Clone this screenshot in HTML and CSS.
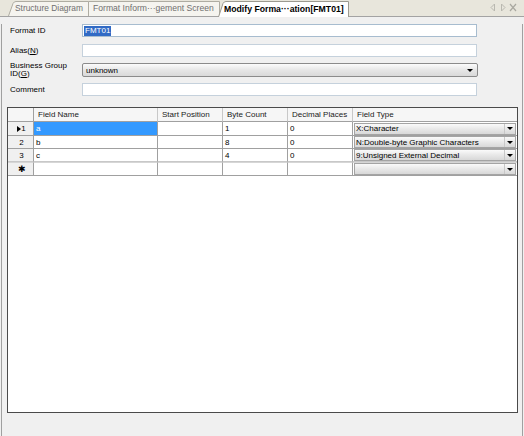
FILE: index.html
```html
<!DOCTYPE html>
<html>
<head>
<meta charset="utf-8">
<link rel="stylesheet" href="styles.css">
</head>
<body>
<div class="window">
  <div class="tabbar">
    <div class="tabs">
      <div class="tab tab-first">
        <svg class="tab-bg" width="81" height="15" viewBox="0 0 81 15"><path d="M0.5 15 L5 2.5 Q6 0.5 8 0.5 L80.5 0.5 L80.5 15" fill="#f5f4ef" stroke="#aeaca2"/></svg>
        <span class="tab-text">Structure Diagram</span>
      </div>
      <div class="tab tab-mid">
        <svg class="tab-bg" width="132" height="15" viewBox="0 0 132 15"><path d="M0.5 15 L0.5 0.5 L131.5 0.5 L131.5 15" fill="#f5f4ef" stroke="#aeaca2"/></svg>
        <span class="tab-text">Format Inform···gement Screen</span>
      </div>
      <div class="tab tab-active">
        <svg class="tab-bg" width="131" height="16" viewBox="0 0 131 16"><path d="M0.5 16 L5 2.5 Q6 0.5 8 0.5 L130.5 0.5 L130.5 16" fill="#ffffff" stroke="#9c9a90"/></svg>
        <span class="tab-text">Modify Forma···ation[FMT01]</span>
      </div>
    </div>
    <div class="tab-tools">
      <svg width="28" height="9" viewBox="0 0 28 9">
        <path d="M4.5 1 L1 4.5 L4.5 8 Z" fill="none" stroke="#b9b8b0"/>
        <path d="M11.5 1 L15 4.5 L11.5 8 Z" fill="none" stroke="#b9b8b0"/>
        <path d="M20 1 L26 8 M26 1 L20 8" stroke="#a9a8a0" stroke-width="1.2"/>
      </svg>
    </div>
  </div>
  <div class="panel">
    <div class="form">
      <div class="frow frow-1">
        <span class="flabel">Format ID</span>
        <div class="finput finput-focus"><span class="selected-text">FMT01</span></div>
      </div>
      <div class="frow frow-2">
        <span class="flabel">Alias(<u>N</u>)</span>
        <div class="finput"></div>
      </div>
      <div class="frow frow-3">
        <span class="flabel flabel-2l">Business Group<br>ID(<u>G</u>)</span>
        <div class="fselect"><span class="fselect-text">unknown</span><span class="fselect-arrow"></span></div>
      </div>
      <div class="frow frow-4">
        <span class="flabel">Comment</span>
        <div class="finput"></div>
      </div>
    </div>
    <div class="grid">
      <table class="gtable">
        <thead>
          <tr class="hrow">
            <th class="c-rh"></th>
            <th class="c-name">Field Name</th>
            <th class="c-start">Start Position</th>
            <th class="c-byte">Byte Count</th>
            <th class="c-dec">Decimal Places</th>
            <th class="c-type">Field Type</th>
          </tr>
        </thead>
        <tbody>
          <tr class="r1">
            <td class="rh"><span class="cur"></span>1</td>
            <td class="sel-cell">a</td>
            <td></td>
            <td>1</td>
            <td>0</td>
            <td class="tcell"><div class="combo"><span class="combo-text">X:Character</span><span class="combo-btn"></span></div></td>
          </tr>
          <tr class="r2">
            <td class="rh">2</td>
            <td>b</td>
            <td></td>
            <td>8</td>
            <td>0</td>
            <td class="tcell"><div class="combo"><span class="combo-text">N:Double-byte Graphic Characters</span><span class="combo-btn"></span></div></td>
          </tr>
          <tr class="r3">
            <td class="rh">3</td>
            <td>c</td>
            <td></td>
            <td>4</td>
            <td>0</td>
            <td class="tcell"><div class="combo"><span class="combo-text">9:Unsigned External Decimal</span><span class="combo-btn"></span></div></td>
          </tr>
          <tr class="rnew">
            <td class="rh rh-new">✱</td>
            <td></td>
            <td></td>
            <td></td>
            <td></td>
            <td class="tcell"><div class="combo"><span class="combo-text"></span><span class="combo-btn"></span></div></td>
          </tr>
        </tbody>
      </table>
    </div>
  </div>
</div>
</body>
</html>
```
FILE: styles.css
```css
* { box-sizing: border-box; }
html, body { margin: 0; padding: 0; }
body {
  width: 524px;
  height: 436px;
  background: #f0f0f0;
  font-family: "Liberation Sans", Arial, sans-serif;
  overflow: hidden;
}
.window { width: 524px; height: 436px; }

/* tab bar */
.tabbar {
  height: 17px;
  background: #e8e6dc;
  border-bottom: 1px solid #a3a3a3;
  display: flex;
  justify-content: space-between;
  align-items: flex-end;
}
.tabs { display: flex; align-items: flex-end; padding-left: 8px; height: 16px; }
.tab {
  position: relative;
  height: 15px;
  font-size: 8.4px;
  line-height: 15px;
  color: #707070;
  white-space: nowrap;
}
.tab-bg { position: absolute; left: 0; top: 0; }
.tab-text { position: relative; }
.tab-first { width: 81px; padding-left: 7px; z-index: 2; margin-right: -1px; }
.tab-mid { width: 132px; padding-left: 5px; z-index: 1; margin-right: -2px; font-size: 8.6px; }
.tab-active {
  width: 131px;
  height: 16px;
  margin-bottom: -1px;
  padding-left: 6px;
  line-height: 16px;
  font-size: 8.7px;
  color: #000;
  font-weight: bold;
  z-index: 3;
}
.tab-tools { padding: 0 6px 4px 0; display: flex; }

/* panel */
.panel {
  margin-left: 1px;
  width: 522px;
  height: 416px;
  border: 1px solid #a0a0a0;
  border-top: none;
  background: #f0f0f0;
}
.form { padding-left: 8px; }
.frow { display: flex; align-items: center; }
.frow-1 { margin-top: 7px; height: 13px; }
.frow-2 { margin-top: 7px; height: 13px; }
.frow-3 { margin-top: 6px; height: 14px; }
.frow-4 { margin-top: 6px; height: 13px; }
.flabel {
  width: 72px;
  font-size: 8px;
  color: #000;
  white-space: nowrap;
  line-height: 9px;
}
.flabel-2l { line-height: 8px; margin-top: -1px; }
.finput {
  width: 395px;
  height: 13px;
  background: #fff;
  border: 1px solid #c5d1dc;
  display: flex;
  align-items: center;
  padding-left: 1px;
}
.finput-focus { border-color: #a7bccf; }
.selected-text {
  background: #316ac5;
  color: #fff;
  font-size: 8px;
  line-height: 10px;
  padding: 0 1px;
}
.fselect {
  width: 396px;
  height: 14px;
  border: 1px solid #8b8b8b;
  border-radius: 2px;
  background: linear-gradient(#fbfbfb, #e6e6e6 50%, #d9d9d9);
  display: flex;
  align-items: center;
  justify-content: space-between;
  padding: 0 4px 0 3px;
}
.fselect-text { font-size: 8px; color: #000; }
.fselect-arrow {
  width: 0; height: 0;
  border-left: 3px solid transparent;
  border-right: 3px solid transparent;
  border-top: 3px solid #000;
  margin-top: 1px;
}

/* grid */
.grid {
  margin: 11px 0 0 5px;
  width: 511px;
  height: 306px;
  border: 1px solid #4a4a4a;
  background: #fff;
}
.gtable {
  border-collapse: separate;
  border-spacing: 0;
  table-layout: fixed;
  width: 509px;
  font-size: 8px;
  color: #000;
}
.gtable th, .gtable td {
  padding: 0 0 0 2px;
  border-right: 1px solid #a0a0a0;
  border-bottom: 1px solid #a0a0a0;
  text-align: left;
  font-weight: normal;
  white-space: nowrap;
  overflow: hidden;
}
.hrow th {
  height: 14px;
  background: #f6f6f6;
  padding-left: 4px;
  color: #1a1a1a;
  border-right-color: #c8c8c8;
}
.hrow th.c-rh { border-right-color: #a0a0a0; }
.c-rh { width: 26px; }
.c-name { width: 124px; }
.c-start { width: 65px; }
.c-byte { width: 65px; }
.c-dec { width: 65px; }
.c-type { width: 164px; }
.hrow th.c-type { border-right: none; }
.gtable td.tcell { border-right: none; padding: 0 1px 0 1px; }
.r1 td { height: 14px; }
.r2 td, .r3 td { height: 13px; }
.rnew td { height: 14px; border-top: 1px solid #d6d6d6; }
.r3 td { border-bottom-color: #c8c8c8; }
.gtable td.rh {
  background: #f0f0f0;
  text-align: center;
  padding: 0 0 0 2px;
}
.cur {
  display: inline-block;
  width: 0; height: 0;
  border-top: 3px solid transparent;
  border-bottom: 3px solid transparent;
  border-left: 4px solid #000;
  vertical-align: -1px;
}
.rh-new { font-size: 9px; line-height: 9px; }
.gtable td.sel-cell { background: #3399ff; color: #fff; }
.combo {
  height: 12px;
  border: 1px solid #a4a4a4;
  background: linear-gradient(#fafafa, #e8e8e8 50%, #d8d8d8);
  display: flex;
  align-items: center;
  justify-content: space-between;
}
.combo-text { padding-left: 1px; font-size: 8px; }
.combo-btn {
  width: 11px;
  height: 10px;
  border-left: 1px solid #c8c8c8;
  display: flex;
  align-items: center;
  justify-content: center;
}
.combo-btn::after {
  content: "";
  width: 0; height: 0;
  border-left: 3px solid transparent;
  border-right: 3px solid transparent;
  border-top: 3px solid #000;
}
```
